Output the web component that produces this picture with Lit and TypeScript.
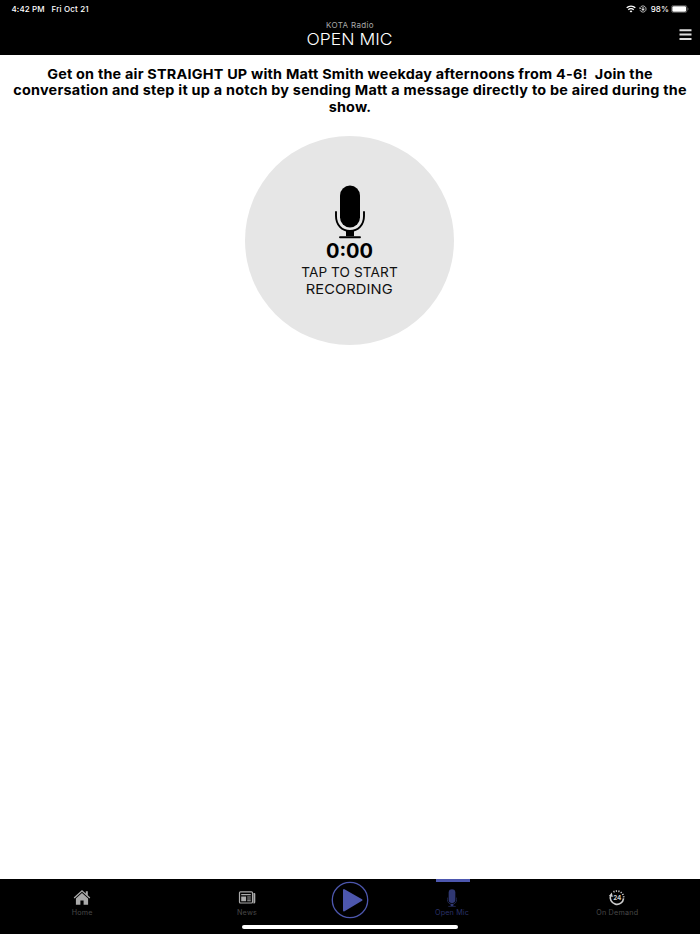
import { LitElement, html, css } from "lit";
import { customElement } from "lit/decorators.js";

@customElement("app-root")
export class AppRoot extends LitElement {
  static styles = css`
    :host { display: flex; flex-direction: column; width: 700px; height: 934px; background: #fff; color: #000; font-family: Inter, "Liberation Sans", sans-serif; overflow: hidden; }
    * { box-sizing: border-box; }
    svg { display: block; flex: none; }
    .header { height: 55px; flex: none; background: #000; color: #fff; }
    .status { height: 17px; display: flex; align-items: center; padding: 0 11px 0 11.5px; font-size: 8px; line-height: 10px; font-weight: 500; }
    .time { letter-spacing: 0.1px; width: 40px; white-space: nowrap; }
    .date { letter-spacing: 0.16px; white-space: nowrap; }
    .indicators { margin-left: auto; display: flex; align-items: center; }
    .wifi { margin-right: 3px; }
    .lock { margin-right: 4px; }
    .pct { margin-right: 2px; letter-spacing: 0.1px; }
    .titles { display: grid; grid-template-columns: 1fr auto 1fr; height: 38px; }
    .names { grid-column: 2; text-align: center; padding-top: 3px; }
    .station { font-size: 8px; line-height: 10px; letter-spacing: 0.35px; color: #aaa; }
    .title { font-size: 16.5px; line-height: 19px; font-weight: 300; transform: scaleX(1.06); }
    .menu { justify-self: end; margin: 12px 8px 0 0; }
    .main { flex: 1; display: flex; flex-direction: column; align-items: center; padding-top: 10.5px; }
    .intro { font-size: 13.6px; line-height: 16.7px; font-weight: 700; text-align: center; white-space: pre; letter-spacing: 0.2px; transform: scaleX(1.059); }
    .line { display: block; }
    .wide { letter-spacing: 0.23px; }
    .record { margin: 20.5px 1px 0 0; width: 209px; height: 209px; border-radius: 50%; background: #e6e6e6; display: flex; flex-direction: column; align-items: center; padding-top: 49px; }
    .timer { font-size: 20px; line-height: 24px; font-weight: 700; }
    .prompt { font-size: 13.6px; line-height: 17px; text-align: center; color: #111; margin-top: 1px; }
    .start { letter-spacing: 0.1px; }
    .recording { letter-spacing: 0.1px; transform: scaleX(1.08); }
    .tabs { height: 55px; flex: none; background: #000; display: grid; grid-template-columns: 164.5px 165px 41px 164px 165.5px; position: relative; }
    .tab { display: flex; flex-direction: column; align-items: center; padding-top: 10px; font-size: 7.2px; line-height: 10px; color: #484848; letter-spacing: 0.22px; position: relative; }
    .tab svg { margin-bottom: 1px; }
    .active { color: #2b3269; letter-spacing: 0.14px; padding-right: 1px; }
    .active::before { content: ""; position: absolute; top: 0; left: 65px; width: 34px; height: 3px; background: #4d57ae; }
    .play { padding: 2px 0 0 1px; }
    .num { font-size: 6.4px; font-weight: 700; letter-spacing: -0.2px; }
    .home { position: absolute; left: 242px; top: 46px; width: 216px; height: 4px; border-radius: 2px; background: #fff; }
  `;

  mic(w: number, h: number, fill: string) {
    return html`<svg width=${w} height=${h} viewBox="0 0 30 54">
      <rect x="5" y="0.5" width="20" height="42" rx="10" fill=${fill} />
      <path d="M1 27v4c0 9 6 15 14 15s14-6 14-15v-4" fill="none" stroke=${fill} stroke-width="1.9" stroke-linecap="round" />
      <path d="M11 45h8v6.2h-8z" fill=${fill} />
      <path d="M5 52.2h20" stroke=${fill} stroke-width="1.9" stroke-linecap="round" />
    </svg>`;
  }

  render() {
    return html`
      <div class="header">
        <div class="status">
          <span class="time">4:42 PM</span><span class="date">Fri Oct 21</span>
          <div class="indicators">
            <svg class="wifi" width="10" height="8" viewBox="0 0 10 8" fill="none" stroke="#fff" stroke-width="1.3">
              <path d="M.7 2.8a6.1 6.1 0 0 1 8.6 0M2.3 4.7a3.8 3.8 0 0 1 5.4 0" /><path d="M5 7.6 3.6 6.2a2 2 0 0 1 2.8 0z" fill="#fff" stroke="none" />
            </svg>
            <svg class="lock" width="8" height="8" viewBox="0 0 8 8" fill="none" stroke="#ddd" stroke-width=".8">
              <path d="M1.2 2.6a3.1 3.1 0 1 1-.1 2.6" /><path d="M.3 2.2 2.3 3.4.6 4.3z" fill="#ddd" stroke="none" /><rect x="2.7" y="3.6" width="2.6" height="1.9" fill="#ddd" stroke="none" /><path d="M3.2 3.7V3a.8.8 0 0 1 1.6 0v.7" stroke-width=".6" />
            </svg>
            <span class="pct">98%</span>
            <svg width="18" height="8" viewBox="0 0 18 8"><rect x=".4" y=".4" width="15.6" height="7.2" rx="2.2" fill="none" stroke="#777" stroke-width=".7" /><rect x="1.3" y="1.3" width="13.8" height="5.4" rx="1.3" fill="#fff" /><path d="M16.7 2.8c1 .3 1 2.1 0 2.4z" fill="#777" /></svg>
          </div>
        </div>
        <div class="titles">
          <div class="names"><div class="station">KOTA Radio</div><div class="title">OPEN MIC</div></div>
          <svg class="menu" width="13" height="12" viewBox="0 0 13 12"><path d="M.5 1.2h12M.5 5.6h12M.5 10h12" stroke="#ddd" stroke-width="2" /></svg>
        </div>
      </div>
      <div class="main">
        <div class="intro"><span class="line">Get on the air STRAIGHT UP with Matt Smith weekday afternoons from 4-6!  Join the</span><span class="line wide">conversation and step it up a notch by sending Matt a message directly to be aired during the</span><span class="line">show.</span></div>
        <div class="record">
          ${this.mic(30, 54, "#000")}
          <div class="timer">0:00</div>
          <div class="prompt"><div class="start">TAP TO START</div><div class="recording">RECORDING</div></div>
        </div>
      </div>
      <div class="tabs">
        <div class="tab"><svg width="18" height="18" viewBox="0 0 18 18" fill="#aaa"><path d="M9 .9.7 8.5l.9 1L9 2.8l7.4 6.7.9-1-2.5-2.3V2.3h-2v2.1z" /><path d="M9 3.9 2.9 9.4v6.4h4.5v-4.3h3.2v4.3h4.5V9.4z" /></svg>Home</div>
        <div class="tab"><svg width="18" height="18" viewBox="0 0 18 18" fill="#aaa">
          <rect x="1.5" y="2.8" width="13" height="11.2" rx="1" fill="none" stroke="#aaa" stroke-width="1.2" />
          <path d="M3.2 5.1h9.6v1.1H3.2zM3.2 7.5h4.9v4.7H3.2zM9.2 7.5h3.6v1H9.2zM9.2 9.4h3.6v1H9.2zM9.2 11.3h3.6v1H9.2z" />
          <path d="M15.4 4.1h1.1a.8.8 0 0 1 .8.8v8a1.6 1.6 0 0 1-1.9 1.6z" />
        </svg>News</div>
        <div class="play"><svg width="38" height="38" viewBox="0 0 38 38"><circle cx="19" cy="19" r="17.7" fill="none" stroke="#4d57ae" stroke-width="1.3" /><path d="M13 9v20.5L30.5 19z" fill="#4d57ae" stroke="#4d57ae" stroke-width="2" stroke-linejoin="round" /></svg></div>
        <div class="tab active">${this.mic(10, 18, "#303873")}Open Mic</div>
        <div class="tab"><svg width="18" height="18" viewBox="0 0 18 18" fill="#ccc">
          <path d="M2.7 6.2a6.7 6.7 0 1 0 12.9 3.2" fill="none" stroke="#ccc" stroke-width="1.6" />
          <path d="M.9 7.1 3.8 3.5l1 4.4z" />
          <path d="M5.5 2.9a6.8 6.8 0 0 1 10.2 5.6" fill="none" stroke="#ccc" stroke-width="1.7" stroke-dasharray="1.2 1.3" />
          <text class="num" x="9.1" y="11.2" text-anchor="middle">24</text>
        </svg>On Demand</div>
        <div class="home"></div>
      </div>`;
  }
}
